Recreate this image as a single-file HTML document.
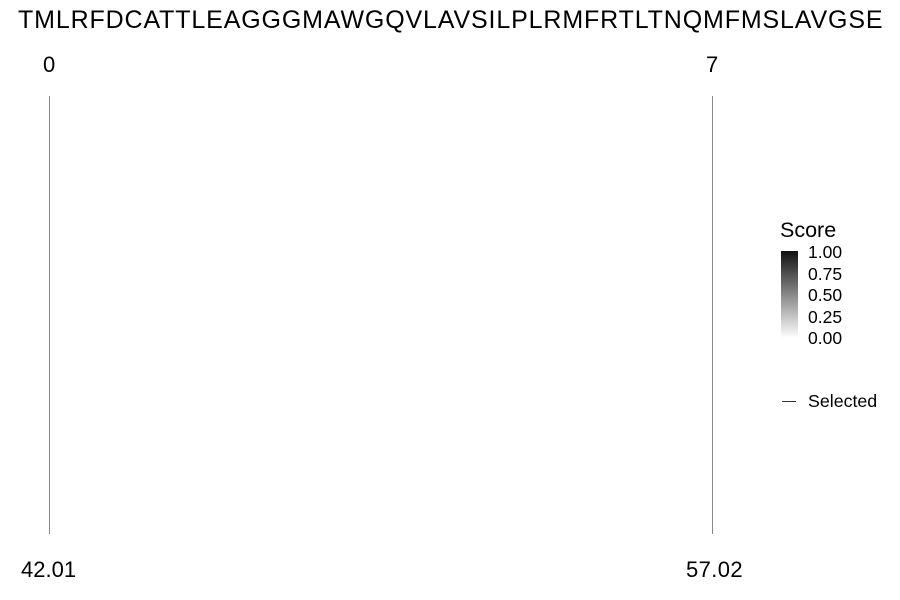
<!DOCTYPE html>
<html><head><style>
body{margin:0;width:900px;height:600px;background:#fff;position:relative;overflow:hidden;font-family:"Liberation Sans",sans-serif;color:#000}
.t{position:absolute;white-space:nowrap}
</style></head><body>
<div class="t" style="left:18px;top:6px;font-size:25px;letter-spacing:0.86px">TMLRFDCATTLEAGGGMAWGQVLAVSILPLRMFRTLTNQMFMSLAVGSE</div>
<div class="t" style="left:43px;top:52px;font-size:22px">0</div>
<div class="t" style="left:706px;top:52px;font-size:22px">7</div>
<div style="position:absolute;left:49px;top:96px;width:1px;height:438px;background:#888"></div>
<div style="position:absolute;left:712px;top:96px;width:1px;height:438px;background:#888"></div>
<div class="t" style="left:21px;top:557px;font-size:22px">42.01</div>
<div class="t" style="left:686px;top:557px;font-size:22px;letter-spacing:0.4px">57.02</div>
<div class="t" style="left:780px;top:218px;font-size:21.5px">Score</div>
<div style="position:absolute;left:781px;top:251px;width:17px;height:87px;background:linear-gradient(#111,#fff)"></div>
<div class="t" style="left:808px;top:242px;font-size:17.5px;line-height:21.5px">1.00<br>0.75<br>0.50<br>0.25<br>0.00</div>
<div style="position:absolute;left:782px;top:401px;width:14px;height:1px;background:#333"></div>
<div class="t" style="left:808px;top:391px;font-size:17.8px">Selected</div>
</body></html>
